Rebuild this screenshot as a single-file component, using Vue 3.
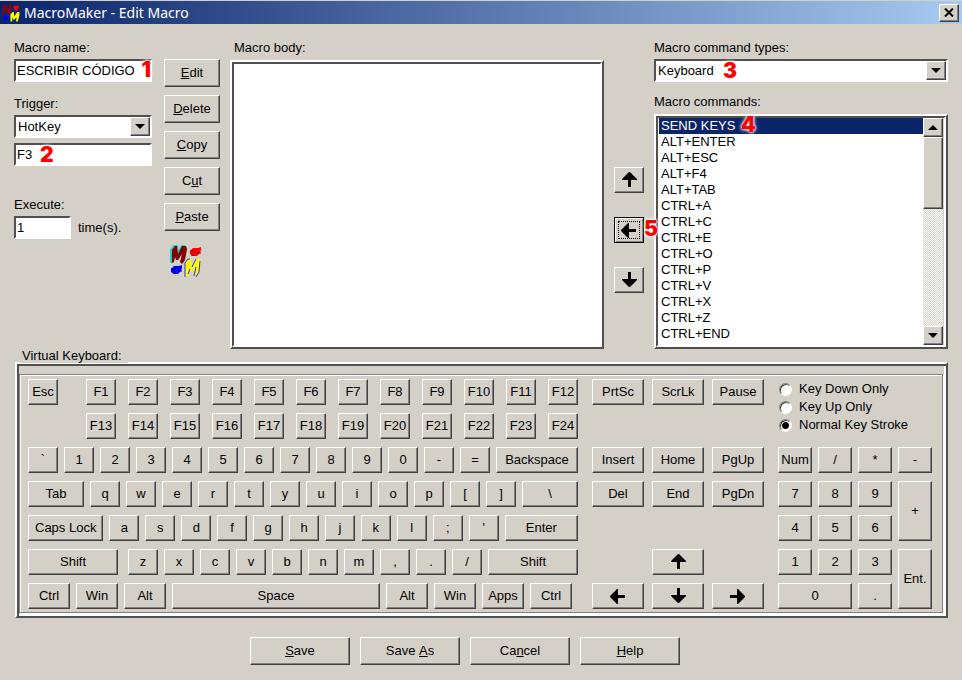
<script setup>
import { ref } from 'vue'

const macroName = ref('ESCRIBIR CÓDIGO')
const trigger = ref('HotKey')
const hotkey = ref('F3')
const times = ref('1')
const body = ref('')
const commandType = ref('Keyboard')
const command = ref('SEND KEYS')
const stroke = ref('Normal Key Stroke')

const tools = [
  ['', 'E', 'dit'],
  ['', 'D', 'elete'],
  ['', 'C', 'opy'],
  ['C', 'u', 't'],
  ['', 'P', 'aste'],
]
const actions = [
  ['', 'S', 'ave'],
  ['Save ', 'A', 's'],
  ['Ca', 'n', 'cel'],
  ['', 'H', 'elp'],
]
const commands = [
  'SEND KEYS', 'ALT+ENTER', 'ALT+ESC', 'ALT+F4', 'ALT+TAB', 'CTRL+A', 'CTRL+C',
  'CTRL+E', 'CTRL+O', 'CTRL+P', 'CTRL+V', 'CTRL+X', 'CTRL+Z', 'CTRL+END',
]
const strokes = ['Key Down Only', 'Key Up Only', 'Normal Key Stroke']

// Each key has a label and a width share; an empty label leaves a blank space.
const k = (t, w = 30, after = false) => ({ t, w, after })
const chars = (s) => s.split('').map((c) => k(c))
const fkeys = (from) => Array.from({ length: 12 }, (_, i) => k('F' + (from + i)))
const rows = [
  { wide: true, keys: [k('Esc'), k('', 4), ...fkeys(1)] },
  { wide: true, keys: [k(''), k('', 4), ...fkeys(13)] },
  { keys: [...chars('`1234567890-='), k('Backspace', 82)] },
  { keys: [k('Tab', 56), ...chars('qwertyuiop[]'), k('\\', 56)] },
  { keys: [k('Caps Lock', 76), ...chars("asdfghjkl;'"), k('Enter', 74)] },
  { keys: [k('Shift', 90, true), ...chars('zxcvbnm,./'), k('Shift', 90)] },
  {
    keys: [
      k('Ctrl', 42), k('Win', 42), k('Alt', 42), k('Space', 208),
      k('Alt', 42), k('Win', 42), k('Apps', 42), k('Ctrl', 42), k('', 0),
    ],
  },
]
const nav = [
  'PrtSc', 'ScrLk', 'Pause', '', '', '', 'Insert', 'Home', 'PgUp', 'Del', 'End', 'PgDn',
  '', '', '', '', '@up', '', '@left', '@down', '@right',
]
const pad = ['Num', '/', '*', '-', '7', '8', '9', '+', '4', '5', '6', '1', '2', '3', 'Ent.', '0', '.']
const padClass = (t) => ({ tall: t === '+' || t === 'Ent.', double: t === '0' })

const arrows = {
  up: 'M8 0 H9 L16 7 V8 H10 V15 H7 V8 H1 V7 Z',
  down: 'M8 15 H9 L16 8 V7 H10 V0 H7 V7 H1 V8 Z',
  left: 'M0 8 V9 L7 16 H8 V10 H15 V7 H8 V1 H7 Z',
  right: 'M15 8 V9 L8 16 H7 V10 H0 V7 H7 V1 H8 Z',
}
</script>

<template>
  <div class="window">
    <header class="titlebar">
      <svg class="title-icon" viewBox="0 0 32 32" aria-hidden="true">
        <path d="M1 18 V5 L5 1 H7 L8 9 L13 1 H17 V7 L14 18 H10 L11 10 L7 16 L5 10 L4 18 Z" fill="#8a0010" />
        <path d="M20 3 H31 L27 11 H22 Z" fill="#f00" />
        <path d="M7 18 L9 22 H14 L10 25 L12 30 L7 27 L2 30 L4 25 L1 22 H5 Z" fill="#00f" />
        <path d="M15 31 V18 L19 14 H21 L22 22 L27 14 H31 V20 L28 31 H25 L26 23 L21 29 L19 23 L18 31 Z" fill="#ff0" />
      </svg>
      <h1>MacroMaker - Edit Macro</h1>
      <button class="close" aria-label="Close">
        <svg viewBox="0 0 10 9" aria-hidden="true"><path d="M1 0.5 L9 8.5 M9 0.5 L1 8.5" stroke="#000" stroke-width="2" /></svg>
      </button>
    </header>

    <main>
      <div class="top">
        <section class="settings">
          <div class="group">
            <label for="name">Macro name:</label>
            <div class="field">
              <input id="name" v-model="macroName" type="text" />
              <span class="mark mark-name">1</span>
            </div>
          </div>
          <div class="group">
            <label for="trigger">Trigger:</label>
            <div class="field combo">
              <select id="trigger" v-model="trigger"><option>HotKey</option></select>
              <span class="drop"><i class="tri down"></i></span>
            </div>
            <div class="field hotkey">
              <input v-model="hotkey" type="text" aria-label="Hotkey" />
              <span class="mark mark-key">2</span>
            </div>
          </div>
          <div class="group execute">
            <label for="times">Execute:</label>
            <div class="times">
              <div class="field"><input id="times" v-model="times" type="text" /></div>
              <span>time(s).</span>
            </div>
          </div>
        </section>

        <div class="tools">
          <button v-for="b in tools" :key="b.join('')" class="btn">{{ b[0] }}<u>{{ b[1] }}</u>{{ b[2] }}</button>
          <svg class="logo" viewBox="0 0 32 32" aria-hidden="true">
            <path d="M1 18 V5 L4 1 H7 V9 L12 1 H15" fill="none" stroke="#2cc" stroke-width="2" />
            <path d="M2 18 V5 L5 1 H7 L8 9 L12 1 H16 L17 4 L15 15 L12 19 L10 17 L12 9 L8 15 H6 L5 12 L4 17 Z" fill="#800000" />
            <path d="M20 6 L23 3 H28 L31 2 V5 L30 8 L27 11 H23 L20 9 Z" fill="#f00" />
            <path d="M20 6 H24 M26 8 H31 M21 10 H25" stroke="#800000" />
            <path d="M1 24 L4 21 H9 L12 20 V23 L11 26 L8 29 H4 L1 27 Z" fill="#00f" />
            <path d="M1 24 H5 M7 26 H12 M3 28 H7" stroke="#000080" />
            <path d="M15 31 V18 L18 14 H21 L22 22 L26 14 H29 L31 17 L29 27 L26 31 L25 28 L26 22 L21 27 L19 24 L18 31 Z" fill="#ff0" />
            <path d="M15 32 V18 L18 14 H20 M22 22 L26 14 M30 16 L29 27 L26 32 M24 31 L26 22 M18 29 L20 24" fill="none" stroke="#3434b0" />
          </svg>
        </div>

        <section class="body">
          <label for="body">Macro body:</label>
          <div class="frame grow"><textarea id="body" v-model="body"></textarea></div>
        </section>

        <div class="move">
          <button class="key" aria-label="Move up"><svg class="arrow" viewBox="0 0 16 16"><path :d="arrows.up" /></svg></button>
          <div class="insert">
            <button class="key focused" aria-label="Insert command"><svg class="arrow" viewBox="0 0 16 16"><path :d="arrows.left" /></svg></button>
            <span class="mark mark-insert">5</span>
          </div>
          <button class="key" aria-label="Move down"><svg class="arrow" viewBox="0 0 16 16"><path :d="arrows.down" /></svg></button>
        </div>

        <section class="commands">
          <label for="types">Macro command types:</label>
          <div class="field combo">
            <select id="types" v-model="commandType"><option>Keyboard</option></select>
            <span class="drop"><i class="tri down"></i></span>
            <span class="mark mark-type">3</span>
          </div>
          <label class="second" for="commands">Macro commands:</label>
          <div class="frame grow">
            <select id="commands" v-model="command" class="list" size="14">
              <option v-for="c in commands" :key="c">{{ c }}</option>
            </select>
            <div class="scroll">
              <button class="key" aria-label="Scroll up"><i class="tri up"></i></button>
              <div class="thumb"></div>
              <button class="key" aria-label="Scroll down"><i class="tri down"></i></button>
            </div>
            <span class="mark mark-send">4</span>
          </div>
        </section>
      </div>

      <section class="keyboard">
        <h2>Virtual Keyboard:</h2>
        <div class="frame board">
          <div class="panel">
            <div class="rows">
              <div v-for="(row, i) in rows" :key="i" class="row" :class="{ wide: row.wide }">
                <component
                  :is="key.t ? 'button' : 'span'"
                  v-for="(key, j) in row.keys"
                  :key="j"
                  :class="{ key: key.t, spaced: key.after }"
                  :style="{ flex: `${key.w} ${key.w} ${key.w}px` }"
                >{{ key.t }}</component>
              </div>
            </div>
            <div class="nav">
              <template v-for="(t, i) in nav" :key="i">
                <span v-if="!t"></span>
                <button v-else-if="t[0] === '@'" class="key" :aria-label="t.slice(1)">
                  <svg class="arrow" viewBox="0 0 16 16"><path :d="arrows[t.slice(1)]" /></svg>
                </button>
                <button v-else class="key">{{ t }}</button>
              </template>
            </div>
            <div class="pad">
              <div class="strokes">
                <label v-for="s in strokes" :key="s"><input v-model="stroke" type="radio" name="stroke" :value="s" />{{ s }}</label>
              </div>
              <button v-for="t in pad" :key="t" class="key" :class="padClass(t)">{{ t }}</button>
            </div>
          </div>
        </div>
      </section>

      <footer>
        <button v-for="b in actions" :key="b.join('')" class="btn">{{ b[0] }}<u>{{ b[1] }}</u>{{ b[2] }}</button>
      </footer>
    </main>
  </div>
</template>

<style>
body {
  background: #d4d0c8;
}
</style>

<style scoped>
* {
  box-sizing: border-box;
}
.window {
  min-height: 100vh;
  border-top: 1px solid #d4d0c8;
  background: #d4d0c8;
  color: #000;
  font: 13px/16px "Liberation Sans", Arial, sans-serif;
}
button,
input,
select,
textarea {
  margin: 0;
  padding: 0;
  border: 0;
  border-radius: 0;
  outline: 0;
  color: inherit;
  font: inherit;
}
.titlebar {
  display: flex;
  align-items: center;
  height: 23px;
  padding: 0 3px 0 2px;
  background: linear-gradient(90deg, #0a246a, #a6caf0);
}
.title-icon {
  width: 18px;
  height: 18px;
}
h1 {
  flex: 1;
  margin: 0 0 0 4px;
  color: #fff;
  font: 14px/20px "Noto Sans", sans-serif;
}
.close {
  display: grid;
  place-items: center;
  width: 20px;
  height: 18px;
  border: 1px solid;
  border-color: #fff #404040 #404040 #fff;
  background: #d4d0c8;
  box-shadow: inset -1px -1px #808080;
}
.close svg {
  width: 10px;
  height: 9px;
}
main {
  padding: 16px 14px 14px;
}
.top {
  display: grid;
  grid-template-columns: 140px 56px minmax(0, 374fr) 30px minmax(0, 294fr);
  gap: 10px;
  height: 309px;
}
label {
  display: block;
}
.settings {
  padding-right: 2px;
}
.group {
  margin-bottom: 14px;
}
.group label,
.commands label {
  margin-bottom: 3px;
}
.group.execute {
  margin-top: 31px;
}
.field {
  position: relative;
  height: 23px;
  border: 2px solid;
  border-color: #505050 #fff #fff #505050;
  background: #fff;
}
.field input,
.field select {
  display: block;
  width: 100%;
  height: 19px;
  padding: 0 1px;
  appearance: none;
  background: transparent;
}
.field select {
  padding: 0 2px;
}
.hotkey {
  margin-top: 5px;
}
.times {
  display: flex;
  align-items: center;
  gap: 7px;
}
.times .field {
  width: 57px;
}
.drop {
  position: absolute;
  top: 0;
  right: 0;
  display: grid;
  place-items: center;
  width: 20px;
  height: 19px;
  border: 1px solid;
  border-color: #fff #404040 #404040 #fff;
  background: #d4d0c8;
  box-shadow: inset -1px -1px #808080;
  pointer-events: none;
}
.tri {
  border: 4px solid transparent;
}
.tri.down {
  border-width: 5px 5px 0;
  border-top-color: #000;
}
.tri.up {
  border-width: 0 5px 5px;
  border-bottom-color: #000;
}
.tools {
  display: flex;
  flex-direction: column;
  gap: 8px;
  padding-top: 19px;
}
.btn,
.key {
  display: grid;
  grid-auto-flow: column;
  place-content: center;
  place-items: center;
  min-width: 0;
  border: 1px solid;
  border-color: #fff #404040 #404040 #fff;
  background: #d4d0c8;
  box-shadow: inset -1px -1px #808080;
  white-space: pre;
}
.btn {
  height: 28px;
}
.key {
  height: 26px;
}
.logo {
  width: 32px;
  height: 32px;
  margin: 6px;
}
.body,
.commands {
  display: flex;
  flex-direction: column;
}
.body label {
  padding-left: 4px;
  margin-bottom: 4px;
}
.commands .second {
  margin-top: 12px;
  margin-bottom: 4px;
}
.frame {
  position: relative;
  border: 2px solid;
  border-color: #fff #505050 #505050 #fff;
}
.frame.grow {
  display: flex;
  flex: 1;
  min-height: 0;
}
.frame textarea {
  flex: 1;
  min-width: 0;
  resize: none;
}
.frame.grow::after {
  position: absolute;
  inset: 0;
  border: 2px solid;
  border-color: #505050 #fff #fff #505050;
  content: "";
  pointer-events: none;
}
.list {
  flex: 1;
  min-width: 0;
  padding: 2px 0 2px 3px;
  overflow: hidden;
  background: #fff;
}
.list option {
  height: 16px;
  min-height: 16px;
  padding: 0 2px;
  line-height: 16px;
}
.list option:checked {
  background: #0a246a linear-gradient(#0a246a, #0a246a);
  color: #fff;
  -webkit-text-fill-color: #fff;
}
.scroll {
  display: flex;
  flex-direction: column;
  justify-content: space-between;
  width: 23px;
  padding: 2px 0;
  border-right: 3px solid #d4d0c8;
  background: repeating-conic-gradient(#fff 0 25%, #d4d0c8 0 50%) 0 0 / 2px 2px;
}
.scroll .key {
  height: 19px;
}
.thumb {
  height: 72px;
  margin-bottom: auto;
  border: 1px solid;
  border-color: #fff #404040 #404040 #fff;
  background: #d4d0c8;
  box-shadow: inset -1px -1px #808080;
}
.move {
  display: flex;
  flex-direction: column;
  gap: 24px;
  padding-top: 127px;
}
.move .key {
  width: 100%;
}
.insert {
  position: relative;
}
.focused {
  border-color: #000;
  box-shadow: inset 1px 1px #fff, inset -1px -1px #808080;
  outline: 1px dotted #000;
  outline-offset: -5px;
}
.arrow {
  width: 16px;
  height: 16px;
}
.mark {
  position: absolute;
  z-index: 1;
  color: #f00;
  font: 900 21px/22px Inter, sans-serif;
  text-shadow: 0 0 2px #fff, 0 0 3px #fff, 0 0 4px #fff;
  pointer-events: none;
}
.mark-name {
  top: -2px;
  right: -1px;
}
.mark-key {
  top: -1px;
  left: 24px;
}
.mark-type {
  top: -1px;
  left: 67px;
}
.mark-send {
  top: -2px;
  left: 85px;
}
.mark-insert {
  top: 1px;
  left: 30px;
}
.keyboard {
  padding-left: 1px;
}
h2 {
  position: relative;
  z-index: 1;
  width: fit-content;
  margin: 0 0 -1px 5px;
  padding: 0 6px 0 2px;
  background: #d4d0c8;
  font: inherit;
  line-height: 14px;
}
.board {
  padding: 10px 3px 3px 2px;
  box-shadow: inset 2px 2px #505050, inset -2px -2px #fff;
}
.panel {
  display: grid;
  grid-template-columns: minmax(0, 550fr) minmax(0, 172fr) minmax(0, 154fr);
  gap: 14px;
  padding: 4px 10px 3px 8px;
  border: 1px solid #808080;
  box-shadow: inset 1px 1px #fff, 1px 1px #fff;
}
.rows {
  display: grid;
  gap: 8px;
}
.row {
  display: flex;
  gap: 6px;
}
.row.wide {
  gap: 12px;
}
.row .spaced {
  margin-right: 4px;
}
.nav {
  display: grid;
  grid-template-columns: repeat(3, minmax(0, 1fr));
  grid-auto-rows: 26px;
  gap: 8px;
}
.pad {
  display: grid;
  grid-template-columns: repeat(4, minmax(0, 1fr));
  grid-auto-rows: 26px;
  gap: 8px 6px;
}
.tall {
  grid-row: span 2;
  height: auto;
}
.double {
  grid-column: span 2;
}
.strokes {
  grid-column: 1 / -1;
  grid-row: span 2;
  padding-top: 1px;
}
.strokes label {
  display: flex;
  align-items: center;
  gap: 7px;
  height: 18px;
  padding-left: 1px;
  white-space: nowrap;
}
.strokes input {
  width: 13px;
  height: 13px;
  appearance: none;
  border: 1px solid;
  border-color: #808080 #fff #fff #808080;
  border-radius: 50%;
  background: #fff;
  box-shadow: inset 1px 1px #404040;
}
.strokes input:checked {
  background: radial-gradient(circle, #000 3px, #fff 4px);
}
footer {
  display: flex;
  justify-content: center;
  gap: 10px;
  padding: 19px 32px 0 0;
}
footer .btn {
  width: 100px;
}
</style>
